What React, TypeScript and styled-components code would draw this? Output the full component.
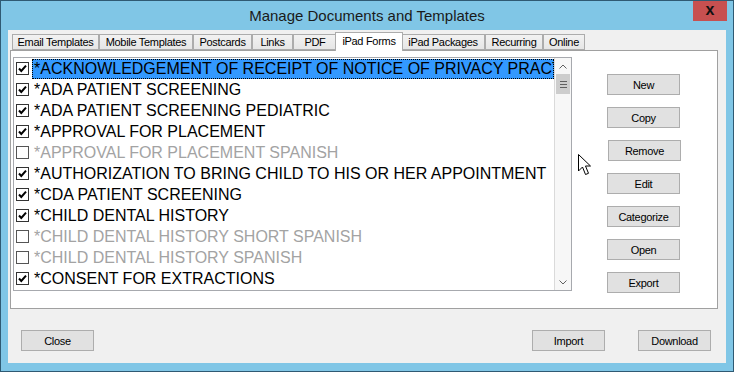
import React from "react";
import styled, { createGlobalStyle } from "styled-components";

const GlobalStyle = createGlobalStyle`
  html, body { margin: 0; padding: 0; background: #ffffff; }
  body { width: 734px; height: 372px; overflow: hidden; }
  * { box-sizing: border-box; }
`;

const Window = styled.div`
  position: relative;
  width: 734px;
  height: 372px;
  border: 1px solid #2f5a73;
  background: #80c6e6;
  display: flex;
  flex-direction: column;
  font-family: "Liberation Sans", Arial, sans-serif;
`;

const TitleBar = styled.div`
  height: 29px;
  flex-shrink: 0;
  display: grid;
  grid-template-columns: 1fr auto 1fr;
  align-items: start;
`;

const Title = styled.div`
  grid-column: 2;
  font-size: 15px;
  line-height: 30px;
  color: #1a1a1a;
  white-space: nowrap;
`;

const CloseButton = styled.div`
  grid-column: 3;
  justify-self: end;
  margin-right: 6px;
  width: 34px;
  height: 20px;
  background: #c75050;
  display: flex;
  align-items: center;
  justify-content: center;
  font-weight: bold;
  font-size: 16px;
  line-height: 1;
  color: #111;
  padding-bottom: 3px;
`;

const Client = styled.div`
  flex: 1;
  margin: 0 7px 8px 7px;
  background: #f0f0f0;
  display: flex;
  flex-direction: column;
`;

const TabControl = styled.div`
  margin: 2px 8px 0 2px;
  display: flex;
  flex-direction: column;
`;

const TabStrip = styled.div`
  height: 18px;
  display: flex;
  align-items: flex-end;
  padding-left: 2px;
`;

const Tab = styled.div<{ $w: number; $active?: boolean }>`
  width: ${(p) => (p.$active ? p.$w + 4 : p.$w)}px;
  height: ${(p) => (p.$active ? 19 : 16)}px;
  margin: ${(p) => (p.$active ? "0 -2px -1px -2px" : "0")};
  position: relative;
  z-index: ${(p) => (p.$active ? 1 : 0)};
  border: 1px solid #acacac;
  border-bottom: ${(p) => (p.$active ? "none" : "1px solid #acacac")};
  background: ${(p) =>
    p.$active ? "#ffffff" : "linear-gradient(#f2f2f2, #e6e6e6)"};
  font-size: 11px;
  letter-spacing: -0.3px;
  color: #000;
  display: flex;
  align-items: center;
  justify-content: center;
  white-space: nowrap;
  padding-bottom: ${(p) => (p.$active ? 2 : 0)}px;
`;

const Panel = styled.div`
  height: 259px;
  border: 1px solid #a0a0a0;
  background: #ffffff;
  display: flex;
  align-items: flex-start;
  padding: 6px 0 0 2px;
`;

const ListBox = styled.div`
  width: 559px;
  height: 234px;
  border: 1px solid #a7a9ae;
  display: flex;
  flex-shrink: 0;
  background: #fff;
`;

const Items = styled.div`
  flex: 1;
  min-width: 0;
  overflow: hidden;
  display: flex;
  flex-direction: column;
`;

const Row = styled.div`
  height: 21px;
  flex-shrink: 0;
  display: flex;
  align-items: center;
  padding-left: 2px;
`;

const CheckBox = styled.svg`
  width: 13px;
  height: 13px;
  flex-shrink: 0;
  margin-top: -1px;
`;

const Label = styled.div<{ $dim?: boolean; $selected?: boolean }>`
  margin-left: 3px;
  flex: 1;
  min-width: 0;
  height: 20px;
  padding-left: 2px;
  font-size: 16px;
  line-height: 19px;
  white-space: nowrap;
  overflow: hidden;
  color: ${(p) => (p.$dim ? "#a3a3a3" : "#000000")};
  background: ${(p) => (p.$selected ? "#3399ff" : "transparent")};
  outline: ${(p) => (p.$selected ? "1px dotted #000" : "none")};
  outline-offset: -1px;
`;

const ScrollBar = styled.div`
  width: 17px;
  flex-shrink: 0;
  border-left: 1px solid #dadada;
  background: #f7f7f7;
  display: flex;
  flex-direction: column;
`;

const ScrollArrow = styled.div`
  height: 16px;
  display: flex;
  align-items: center;
  justify-content: center;
`;

const Thumb = styled.div`
  height: 20px;
  margin: 0 1px;
  background: #cdcdcd;
  display: flex;
  flex-direction: column;
  align-items: center;
  justify-content: center;
  gap: 2px;
`;

const Grip = styled.div`
  width: 7px;
  height: 1px;
  background: #606060;
`;

const Track = styled.div`
  flex: 1;
`;

const SideButtons = styled.div`
  margin-left: 35px;
  padding-top: 17px;
  display: flex;
  flex-direction: column;
  gap: 12px;
`;

const Button = styled.div<{ $nudge?: number }>`
  width: 73px;
  height: 21px;
  margin-left: ${(p) => p.$nudge ?? 0}px;
  border: 1px solid #adadad;
  background: #e1e1e1;
  font-size: 11px;
  letter-spacing: -0.3px;
  color: #000;
  display: flex;
  align-items: center;
  justify-content: center;
`;

const BottomBar = styled.div`
  margin-top: 21px;
  padding: 0 15px 0 13px;
  display: flex;
  align-items: flex-start;
  gap: 33px;
`;

const Spacer = styled.div`
  flex: 1;
`;

const Cursor = styled.svg`
  position: absolute;
  left: 577px;
  top: 153px;
  width: 14px;
  height: 22px;
`;

type Item = { text: string; checked: boolean; selected?: boolean };

const items: Item[] = [
  { text: "*ACKNOWLEDGEMENT OF RECEIPT OF NOTICE OF PRIVACY PRACTICES", checked: true, selected: true },
  { text: "*ADA PATIENT SCREENING", checked: true },
  { text: "*ADA PATIENT SCREENING PEDIATRIC", checked: true },
  { text: "*APPROVAL FOR PLACEMENT", checked: true },
  { text: "*APPROVAL FOR PLACEMENT SPANISH", checked: false },
  { text: "*AUTHORIZATION TO BRING CHILD TO HIS OR HER APPOINTMENT", checked: true },
  { text: "*CDA PATIENT SCREENING", checked: true },
  { text: "*CHILD DENTAL HISTORY", checked: true },
  { text: "*CHILD DENTAL HISTORY SHORT SPANISH", checked: false },
  { text: "*CHILD DENTAL HISTORY SPANISH", checked: false },
  { text: "*CONSENT FOR EXTRACTIONS", checked: true },
];

const tabs: { label: string; w: number; active?: boolean }[] = [
  { label: "Email Templates", w: 87 },
  { label: "Mobile Templates", w: 94 },
  { label: "Postcards", w: 59 },
  { label: "Links", w: 41 },
  { label: "PDF", w: 44 },
  { label: "iPad Forms", w: 64, active: true },
  { label: "iPad Packages", w: 84 },
  { label: "Recurring", w: 58 },
  { label: "Online", w: 42 },
];

const sideButtons = ["New", "Copy", "Remove", "Edit", "Categorize", "Open", "Export"];

function Check({ checked }: { checked: boolean }) {
  return (
    <CheckBox viewBox="0 0 13 13">
      <rect x="0.5" y="0.5" width="12" height="12" fill="#fff" stroke={checked ? "#333" : "#555"} />
      {checked && (
        <path d="M3 6.5 L5.3 9 L10 3.6" fill="none" stroke="#000" strokeWidth="2" />
      )}
    </CheckBox>
  );
}

export default function App() {
  return (
    <>
      <GlobalStyle />
      <Window>
        <TitleBar>
          <Title>Manage Documents and Templates</Title>
          <CloseButton>x</CloseButton>
        </TitleBar>
        <Client>
          <TabControl>
            <TabStrip>
              {tabs.map((t) => (
                <Tab key={t.label} $w={t.w} $active={t.active}>
                  {t.label}
                </Tab>
              ))}
            </TabStrip>
            <Panel>
              <ListBox>
                <Items>
                  {items.map((it) => (
                    <Row key={it.text}>
                      <Check checked={it.checked} />
                      <Label $dim={!it.checked} $selected={it.selected}>
                        {it.text}
                      </Label>
                    </Row>
                  ))}
                </Items>
                <ScrollBar>
                  <ScrollArrow>
                    <svg width="8" height="5" viewBox="0 0 8 5">
                      <path d="M0.5 4.5 L4 1 L7.5 4.5" fill="none" stroke="#606060" strokeWidth="1" />
                    </svg>
                  </ScrollArrow>
                  <Thumb>
                    <Grip />
                    <Grip />
                    <Grip />
                  </Thumb>
                  <Track />
                  <ScrollArrow>
                    <svg width="8" height="5" viewBox="0 0 8 5">
                      <path d="M0.5 0.5 L4 4 L7.5 0.5" fill="none" stroke="#606060" strokeWidth="1" />
                    </svg>
                  </ScrollArrow>
                </ScrollBar>
              </ListBox>
              <SideButtons>
                {sideButtons.map((b) => (
                  <Button key={b} $nudge={b === "Remove" ? 1 : 0}>
                    {b}
                  </Button>
                ))}
              </SideButtons>
            </Panel>
          </TabControl>
          <BottomBar>
            <Button>Close</Button>
            <Spacer />
            <Button>Import</Button>
            <Button>Download</Button>
          </BottomBar>
        </Client>
        <Cursor viewBox="0 0 14 22">
          <path
            d="M0.5 0.5 L0.5 17 L4.5 13 L7.5 20.5 L10.5 19.3 L7.5 12 L12.5 12 Z"
            fill="#fff"
            stroke="#000"
            strokeWidth="1"
            strokeLinejoin="miter"
          />
        </Cursor>
      </Window>
    </>
  );
}
